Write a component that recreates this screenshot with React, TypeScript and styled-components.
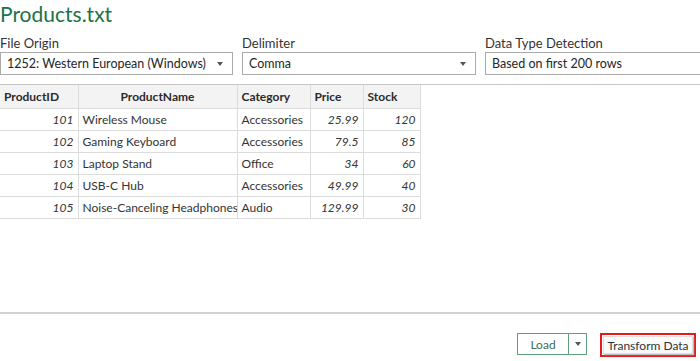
import React from 'react';
import styled, { createGlobalStyle } from 'styled-components';

const GlobalStyle = createGlobalStyle`
  html, body {
    margin: 0;
    padding: 0;
    background: #ffffff;
    overflow: hidden;
  }
  body {
    font-family: Lato, "Open Sans", "Liberation Sans", sans-serif;
    color: #333333;
  }
`;

const Page = styled.div`
  width: 700px;
  height: 361px;
  display: flex;
  flex-direction: column;
  overflow: hidden;
`;

const Title = styled.h1`
  margin: 0;
  height: 32px;
  font-size: 21px;
  font-weight: 400;
  line-height: 28px;
  color: #217346;
  white-space: nowrap;
`;

const OptionsRow = styled.div`
  display: flex;
  gap: 9px;
  padding-top: 2px;
  margin-bottom: 9px;
`;

const Field = styled.div<{ $width: number }>`
  display: flex;
  flex-direction: column;
  width: ${p => p.$width}px;
  flex-shrink: 0;
`;

const Label = styled.label`
  font-size: 13px;
  line-height: 18px;
  color: #333333;
`;

const Select = styled.div`
  height: 21px;
  border: 1px solid #ababab;
  display: flex;
  align-items: center;
  padding: 0 6px;
  font-size: 12.5px;
  color: #262626;
  background: #fff;
`;

const SelectText = styled.span`
  flex: 1;
  white-space: nowrap;
`;

const Caret = styled.span`
  width: 0;
  height: 0;
  border-left: 3.5px solid transparent;
  border-right: 3.5px solid transparent;
  border-top: 4px solid #555;
  margin-right: 3px;
`;

const TableArea = styled.div`
  height: 227px;
  border-top: 1px solid #c6c6c6;
  border-bottom: 2px solid #d2d2d2;
`;

const Grid = styled.table`
  border-collapse: collapse;
  table-layout: fixed;
  width: 420px;
  font-size: 12px;
  color: #333;
`;

const HeadCell = styled.th<{ $w: number; $center?: boolean }>`
  width: ${p => p.$w}px;
  height: 23px;
  padding: 0 4px;
  box-sizing: border-box;
  background: #f3f3f3;
  border-right: 1px solid #dcdcdc;
  border-bottom: 1px solid #dcdcdc;
  font-weight: 700;
  text-align: ${p => (p.$center ? 'center' : 'left')};
  white-space: nowrap;
  overflow: hidden;
  color: #2b2b2b;
`;

const Cell = styled.td<{ $num?: boolean }>`
  height: 22px;
  padding: 0 4px;
  box-sizing: border-box;
  border-right: 1px solid #dcdcdc;
  border-bottom: 1px solid #dcdcdc;
  text-align: ${p => (p.$num ? 'right' : 'left')};
  font-style: ${p => (p.$num ? 'italic' : 'normal')};
  white-space: nowrap;
  overflow: hidden;
`;

const Footer = styled.div`
  flex: 1;
  display: flex;
  justify-content: flex-end;
  align-items: flex-start;
  padding: 19px 4px 0 0;
  gap: 13px;
`;

const SplitButton = styled.div`
  display: flex;
  height: 20px;
  border: 1px solid #5f9e7a;
`;

const LoadPart = styled.button`
  width: 51px;
  border: none;
  border-right: 1px solid #5f9e7a;
  background: #fff;
  font-family: inherit;
  font-size: 12px;
  color: #3d6b52;
  padding: 0;
`;

const ArrowPart = styled.button`
  width: 17px;
  border: none;
  background: #fff;
  display: flex;
  align-items: center;
  justify-content: center;
  padding: 0;
`;

const Highlight = styled.div`
  border: 2px solid #e31b1b;
  padding: 1px;
`;

const TransformButton = styled.button`
  display: block;
  width: 90px;
  height: 18px;
  border: 1px solid #e0e0e0;
  box-shadow: 1px 1px 1px #bdbdbd;
  background: #fafafa;
  font-family: inherit;
  font-size: 12px;
  color: #333;
  padding: 0;
`;

const columns = [
  { name: 'ProductID', w: 78 },
  { name: 'ProductName', w: 159, center: true },
  { name: 'Category', w: 73 },
  { name: 'Price', w: 53 },
  { name: 'Stock', w: 57 },
];

const rows = [
  [101, 'Wireless Mouse', 'Accessories', '25.99', 120],
  [102, 'Gaming Keyboard', 'Accessories', '79.5', 85],
  [103, 'Laptop Stand', 'Office', '34', 60],
  [104, 'USB-C Hub', 'Accessories', '49.99', 40],
  [105, 'Noise-Canceling Headphones', 'Audio', '129.99', 30],
];

const App: React.FC = () => {
  return (
    <Page>
      <GlobalStyle />
      <Title>Products.txt</Title>
      <OptionsRow>
        <Field $width={233}>
          <Label>File Origin</Label>
          <Select>
            <SelectText>1252: Western European (Windows)</SelectText>
            <Caret />
          </Select>
        </Field>
        <Field $width={234}>
          <Label>Delimiter</Label>
          <Select>
            <SelectText>Comma</SelectText>
            <Caret />
          </Select>
        </Field>
        <Field $width={240}>
          <Label>Data Type Detection</Label>
          <Select>
            <SelectText>Based on first 200 rows</SelectText>
          </Select>
        </Field>
      </OptionsRow>
      <TableArea>
        <Grid>
          <thead>
            <tr>
              {columns.map(c => (
                <HeadCell key={c.name} $w={c.w} $center={c.center}>
                  {c.name}
                </HeadCell>
              ))}
            </tr>
          </thead>
          <tbody>
            {rows.map(r => (
              <tr key={r[0]}>
                <Cell $num>{r[0]}</Cell>
                <Cell>{r[1]}</Cell>
                <Cell>{r[2]}</Cell>
                <Cell $num>{r[3]}</Cell>
                <Cell $num>{r[4]}</Cell>
              </tr>
            ))}
          </tbody>
        </Grid>
      </TableArea>
      <Footer>
        <SplitButton>
          <LoadPart>Load</LoadPart>
          <ArrowPart>
            <Caret style={{ marginRight: 0 }} />
          </ArrowPart>
        </SplitButton>
        <Highlight>
          <TransformButton>Transform Data</TransformButton>
        </Highlight>
      </Footer>
    </Page>
  );
};

export default App;
